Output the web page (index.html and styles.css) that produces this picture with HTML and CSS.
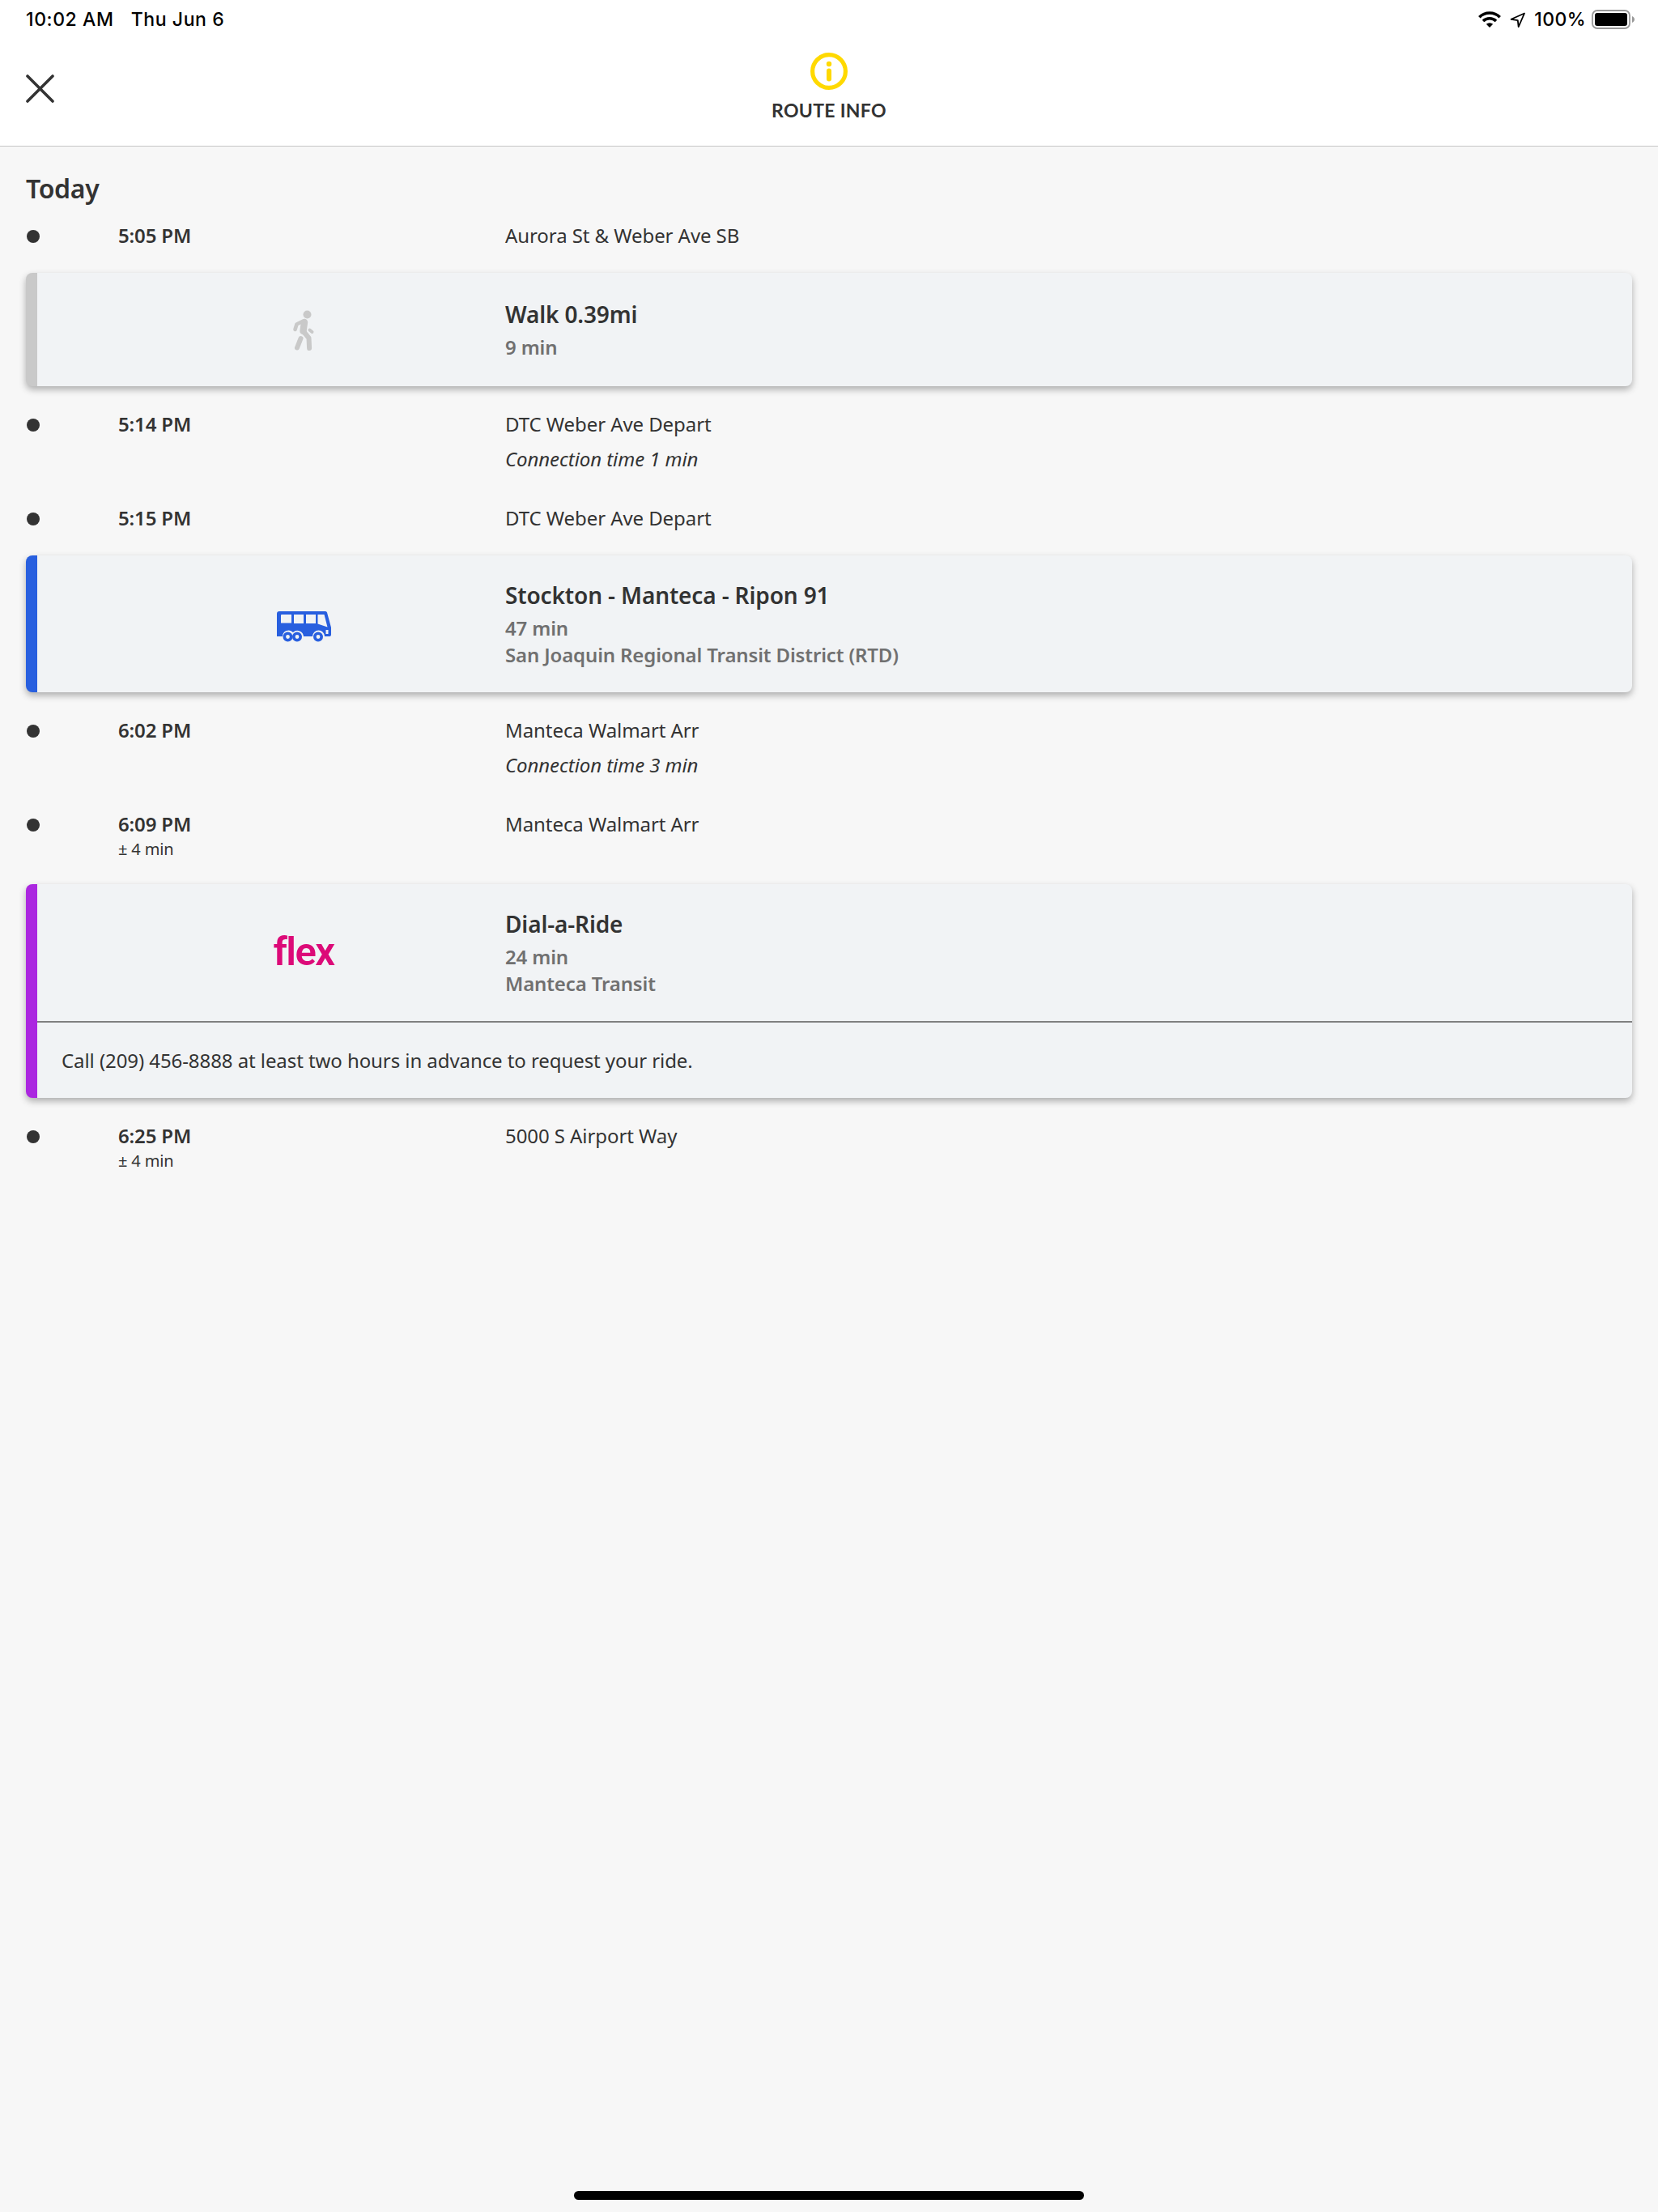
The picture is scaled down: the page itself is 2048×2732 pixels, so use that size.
FILE: index.html
```
<!DOCTYPE html>
<html lang="en">
<head>
    <meta charset="UTF-8">
    <meta name="viewport" content="width=device-width, initial-scale=1.0">
    <title>Route Info</title>
    <link rel="stylesheet" href="styles.css">
</head>
<body>

    <header class="header">
        <div class="status-bar">
            <div class="status-left">
                <span>10:02 AM</span>
                <span>Thu Jun 6</span>
            </div>
            <div class="status-right">
                <svg class="wifi" width="28" height="20" viewBox="0 0 28 20">
                    <g fill="none" stroke="#000" stroke-width="3.6">
                        <path d="M1.3 7.2a18.2 18.2 0 0 1 25.4 0"/>
                        <path d="M6 12a11.6 11.6 0 0 1 16 0"/>
                    </g>
                    <path d="M14 20l-4.2-4.2a6.2 6.2 0 0 1 8.4 0z"/>
                </svg>
                <svg class="location" width="20" height="20" viewBox="0 0 20 20">
                    <path d="M18 1.5L1.6 8.8l8.2 1.4.9 8z" fill="none" stroke="#000" stroke-width="1.8" stroke-linejoin="round"/>
                </svg>
                <span class="percent">100%</span>
                <svg class="battery" width="54" height="24" viewBox="0 0 54 24">
                    <rect x="1" y="1" width="46" height="22" rx="6" fill="none" stroke="#999" stroke-width="1.8"/>
                    <rect x="4" y="4" width="40" height="16" rx="3"/>
                    <path d="M50 8c4 1.5 4 6.5 0 8z" fill="#999"/>
                </svg>
            </div>
        </div>
        <div class="nav-bar">
            <svg class="close" width="36" height="36" viewBox="0 0 36 36">
                <path d="M2 2l31 31M33 2L2 33" stroke="#333" stroke-width="3.6" stroke-linecap="round"/>
            </svg>
            <div class="nav-title">
                <svg width="46" height="46" viewBox="0 0 46 46">
                    <circle cx="23" cy="23" r="20.4" fill="none" stroke="#ffd900" stroke-width="5.2"/>
                    <circle cx="23" cy="14" r="3.2" fill="#ffd900"/>
                    <rect x="20" y="19.5" width="6" height="16" rx="3" fill="#ffd900"/>
                </svg>
                <h1>ROUTE INFO</h1>
            </div>
        </div>
    </header>

    <main class="route">
        <h2>Today</h2>

        <div class="stop">
            <span class="dot"></span>
            <div class="time">5:05 PM</div>
            <div class="place">Aurora St &amp; Weber Ave SB</div>
        </div>

        <section class="card walk">
            <div class="leg">
                <div class="icon">
                    <svg width="28" height="52" viewBox="0 0 28 52">
                        <g fill="none" stroke="#c9c9c9" stroke-linecap="round" stroke-linejoin="round">
                            <path d="M12.5 14L5.5 17.5 3.5 24" stroke-width="4.6"/>
                            <path d="M15 15L13.5 26" stroke-width="8.4"/>
                            <path d="M14 26.5l6.5 8 .6 12.5" stroke-width="6"/>
                            <path d="M10.5 35L6 46.5" stroke-width="6"/>
                            <path d="M21.5 24.5L24.5 27" stroke-width="4"/>
                        </g>
                        <circle cx="18.5" cy="5.5" r="5" fill="#c9c9c9"/>
                    </svg>
                </div>
                <div class="info">
                    <h3>Walk 0.39mi</h3>
                    <p>9 min</p>
                </div>
            </div>
        </section>

        <div class="stop">
            <span class="dot"></span>
            <div class="time">5:14 PM</div>
            <div class="place">DTC Weber Ave Depart <em>Connection time 1 min</em></div>
        </div>

        <div class="stop">
            <span class="dot"></span>
            <div class="time">5:15 PM</div>
            <div class="place">DTC Weber Ave Depart</div>
        </div>

        <section class="card bus">
            <div class="leg">
                <div class="icon">
                    <svg width="68" height="38" viewBox="0 0 68 38">
                        <path d="M3 0h57q1.5 0 2 1.5L67 20v9q0 2-2 2h-6a7.5 7.5 0 0 0-15 0H33a7.7 7.7 0 0 0-13-5 7.5 7.5 0 0 0-13 5H0V3q0-3 3-3z" fill="#285fdf"/>
                        <path d="M6 4h12v10.5H5V5q0-1 1-1zM21 4h12v11H21zM36 4h12v11H36zM50.5 4H58.5l4 15.5L50.5 15.5zM60.5 23h3v5h-3z" fill="#f1f3f5"/>
                        <g fill="none" stroke="#285fdf" stroke-width="3.6">
                            <circle cx="13.5" cy="31.5" r="4.2"/>
                            <circle cx="25" cy="31.5" r="4.2"/>
                            <circle cx="51" cy="31.5" r="4.2"/>
                        </g>
                    </svg>
                </div>
                <div class="info">
                    <h3>Stockton - Manteca - Ripon 91</h3>
                    <p>47 min</p>
                    <p>San Joaquin Regional Transit District (RTD)</p>
                </div>
            </div>
        </section>

        <div class="stop">
            <span class="dot"></span>
            <div class="time">6:02 PM</div>
            <div class="place">Manteca Walmart Arr <em>Connection time 3 min</em></div>
        </div>

        <div class="stop">
            <span class="dot"></span>
            <div class="time">6:09 PM <small>± 4 min</small></div>
            <div class="place">Manteca Walmart Arr</div>
        </div>

        <section class="card flex">
            <div class="leg">
                <div class="icon">flex</div>
                <div class="info">
                    <h3>Dial-a-Ride</h3>
                    <p>24 min</p>
                    <p>Manteca Transit</p>
                </div>
            </div>
            <p class="note">Call (209) 456-8888 at least two hours in advance to request your ride.</p>
        </section>

        <div class="stop">
            <span class="dot"></span>
            <div class="time">6:25 PM <small>± 4 min</small></div>
            <div class="place">5000 S Airport Way</div>
        </div>
    </main>

    <div class="home-indicator"></div>

</body>
</html>
```
FILE: styles.css
```
* {
    box-sizing: border-box;
}

body {
    margin: 0;
    min-height: 100vh;
    display: flex;
    flex-direction: column;
    background-color: #f7f7f7;
    color: #333;
    font-family: "Noto Sans", sans-serif;
    font-size: 24px;
    line-height: 33px;
}

h1, h2, h3, p {
    margin: 0;
}

svg {
    display: block;
}

/* Header */
.header {
    height: 181px;
    background-color: #fff;
    border-bottom: 1px solid #c6c6c6;
}

.status-bar {
    height: 48px;
    padding: 0 28px 0 32px;
    display: flex;
    justify-content: space-between;
    align-items: center;
    color: #000;
    font-family: Inter, sans-serif;
    font-size: 23px;
    font-weight: 500;
    line-height: 48px;
}

.status-left, .status-right {
    display: flex;
    align-items: center;
}

.status-left {
    gap: 21px;
    letter-spacing: 0.6px;
}

.location {
    margin: 2px 10px 0 11px;
}

.percent {
    margin-right: 7px;
    letter-spacing: 0.4px;
}

.nav-bar {
    height: 132px;
    padding: 0 32px;
    display: grid;
    grid-template-columns: 1fr auto 1fr;
}

.close {
    margin-top: 44px;
}

.nav-title {
    padding-top: 17px;
    display: flex;
    flex-direction: column;
    align-items: center;
}

.nav-title h1 {
    margin-top: 9px;
    font-family: Lato, sans-serif;
    font-size: 23px;
    font-weight: 700;
    line-height: 32px;
    letter-spacing: 0.3px;
}

/* Route */
.route {
    flex: 1;
    padding: 30px 32px 0;
}

.route h2 {
    margin-bottom: 19px;
    font-size: 32px;
    font-weight: 600;
    line-height: 44px;
    letter-spacing: -0.3px;
}

.stop {
    display: grid;
    grid-template-columns: 114px 478px 1fr;
}

.stop + .stop {
    margin-top: 40px;
}

.dot {
    width: 16px;
    height: 16px;
    margin: 10px 0 0 1px;
    border-radius: 50%;
    background-color: #333;
}

.time {
    font-weight: 600;
    letter-spacing: -0.14px;
}

.time small {
    display: block;
    margin-top: 1px;
    font-size: 20px;
    font-weight: 400;
    line-height: 27px;
}

.place, .note {
    letter-spacing: -0.075px;
}

.place em {
    display: block;
    margin-top: 10px;
}

/* Cards */
.card {
    margin: 30px 0;
    border-left: 14px solid #c9c9c9;
    border-radius: 8px;
    background-color: #f1f3f5;
    box-shadow: 0 4px 8px rgba(0, 0, 0, 0.3);
}

.card.bus {
    border-left-color: #285fdf;
}

.card.flex {
    border-left-color: #ab27e0;
}

.leg {
    min-height: 140px;
    padding: 30px 0;
    display: flex;
    align-items: center;
}

.icon {
    width: 250px;
    margin: 3px 0 0 204px;
    display: flex;
    justify-content: center;
}

.bus .icon {
    margin: 6px -1px 0 205px;
}

.flex .icon {
    margin-top: -3px;
    color: #dc0a78;
    font-family: Roboto, sans-serif;
    font-size: 49px;
    font-weight: 600;
    letter-spacing: -1.6px;
}

.info {
    margin-left: 124px;
    color: #707070;
    font-weight: 600;
    letter-spacing: -0.14px;
}

.info h3 {
    margin-bottom: 5px;
    color: #333;
    font-size: 28px;
    font-weight: 600;
    line-height: 38px;
}

.note {
    padding: 30px;
    border-top: 2px solid #808080;
}

.home-indicator {
    width: 630px;
    height: 11px;
    margin: 0 auto 15px;
    border-radius: 6px;
    background-color: #000;
}
```
